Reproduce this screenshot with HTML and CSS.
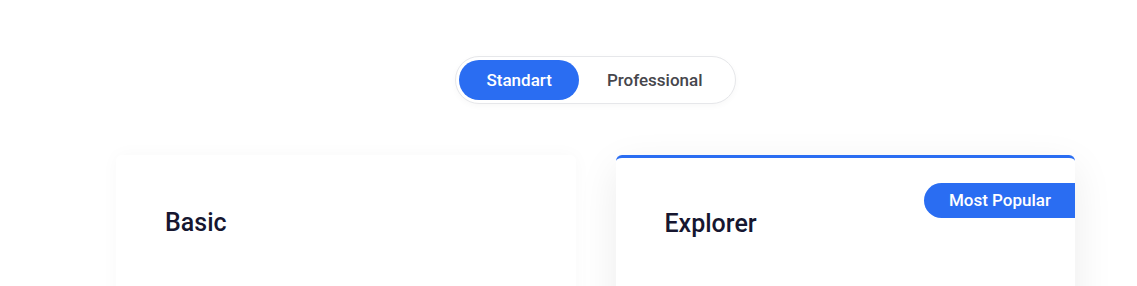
FILE: index.html
```html
<!DOCTYPE html>
<html lang="en">
<head>
    <meta charset="UTF-8">
    <meta name="viewport" content="width=device-width, initial-scale=1.0">
    <title>Pricing</title>
    <link rel="stylesheet" href="styles.css">
</head>
<body>
    <div class="pricing">
        <div class="plan-switch">
            <div class="switch-pill">
                <button class="switch-btn active">Standart</button>
                <button class="switch-btn">Professional</button>
            </div>
        </div>

        <div class="plans-grid">
            <div class="plan-card">
                <h3 class="plan-name">Basic</h3>
            </div>
            <div class="plan-card featured">
                <span class="plan-badge">Most Popular</span>
                <h3 class="plan-name">Explorer</h3>
            </div>
        </div>
    </div>
</body>
</html>
```

FILE: styles.css
```css
:root {
    --primary-color: #2a6df2;
    --title-color: #161630;
    --text-color: #3a3a44;
}

body {
    margin: 0;
    background: #fff;
    font-family: Roboto, 'Liberation Sans', sans-serif;
    color: var(--text-color);
}

.pricing {
    width: 959px;
    margin-left: 116px;
    padding-top: 56px;
}

.plan-switch {
    display: flex;
    justify-content: center;
}

.switch-pill {
    display: flex;
    padding: 3px;
    border: 1px solid #e6e7ea;
    border-radius: 30px;
    box-shadow: 0 2px 6px rgba(0,0,0,0.03);
    background: #fff;
}

.switch-btn {
    height: 40px;
    padding: 0 27px;
    border: none;
    border-radius: 20px;
    background: transparent;
    font-family: inherit;
    font-size: 17px;
    font-weight: 500;
    color: #46464c;
}

.switch-btn + .switch-btn {
    padding: 0 29px 0 28px;
}

.switch-btn.active {
    background: var(--primary-color);
    color: #fff;
}

.plans-grid {
    display: grid;
    grid-template-columns: 1fr 1fr;
    gap: 40px;
    margin-top: 51px;
}

.plan-card {
    position: relative;
    min-height: 200px;
    padding: 54px 49px 40px;
    background: #fff;
    border-radius: 6px;
    box-shadow: 0 0 18px rgba(0,0,0,0.03);
}

.plan-card.featured {
    padding-top: 52px;
    border-top: 3px solid var(--primary-color);
    box-shadow: 0 12px 40px rgba(0,0,0,0.08);
}

.plan-name {
    margin: 0;
    font-size: 25px;
    line-height: 28px;
    font-weight: 500;
    color: var(--title-color);
}

.plan-badge {
    position: absolute;
    top: 25px;
    right: 0;
    height: 35px;
    line-height: 35px;
    padding: 0 24px 0 25px;
    background: var(--primary-color);
    border-radius: 18px 0 0 18px;
    font-size: 17px;
    font-weight: 500;
    color: #fff;
}
```
